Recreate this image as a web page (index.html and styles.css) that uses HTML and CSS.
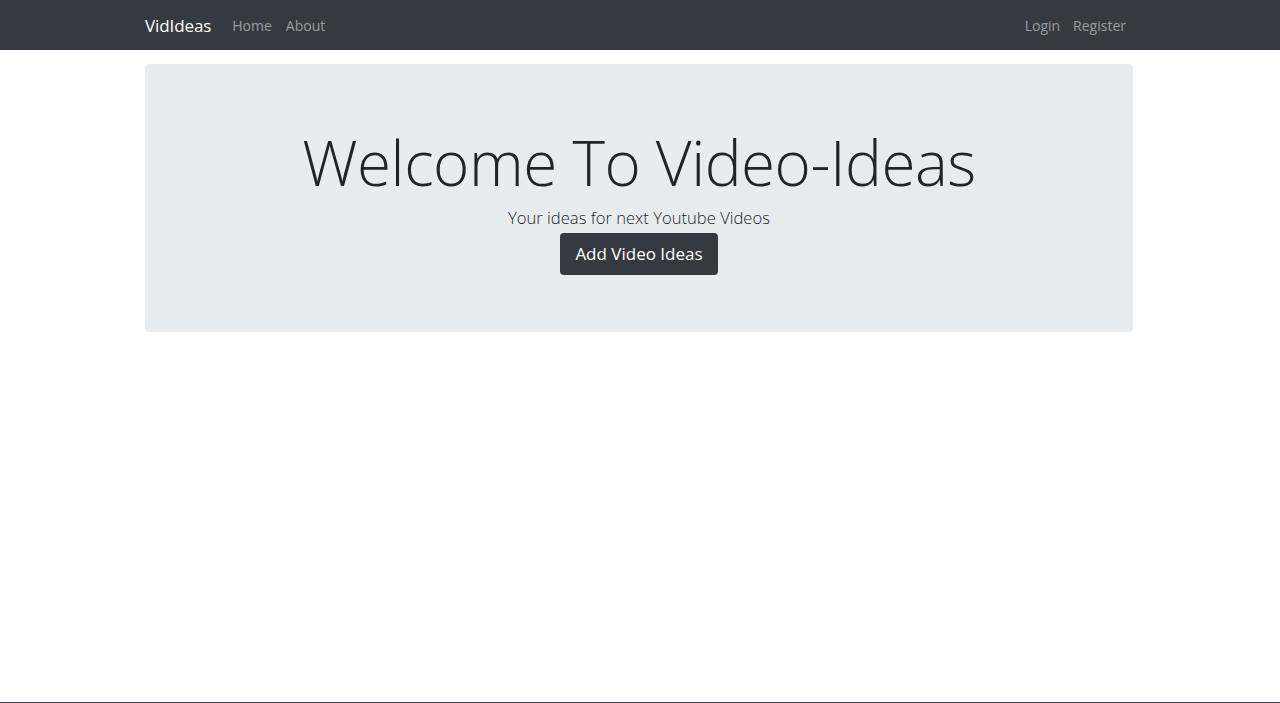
FILE: index.html
```html
<!DOCTYPE html>
<html lang="en">
<head>
<meta charset="utf-8">
<title>VidIdeas</title>
<link rel="stylesheet" href="styles.css">
</head>
<body>
<nav class="navbar">
  <div class="nav-inner">
    <div class="nav-left">
      <a class="brand" href="#">VidIdeas</a>
      <a class="nav-link" href="#">Home</a>
      <a class="nav-link" href="#">About</a>
    </div>
    <div class="nav-right">
      <a class="nav-link" href="#">Login</a>
      <a class="nav-link" href="#">Register</a>
    </div>
  </div>
</nav>
<main class="container">
  <section class="jumbotron">
    <h1 class="display">Welcome To Video-Ideas</h1>
    <p class="lead">Your ideas for next Youtube Videos</p>
    <a class="btn" href="#">Add Video Ideas</a>
  </section>
</main>
<div class="taskbar-edge"></div>
</body>
</html>
```
FILE: styles.css
```css
html, body {
  margin: 0;
  padding: 0;
  background: #ffffff;
  font-family: "Open Sans", "Noto Sans", "Liberation Sans", sans-serif;
  color: #212529;
}
a { text-decoration: none; }

.navbar {
  background: #343a40;
  height: 50px;
}
.nav-inner {
  width: 988px;
  margin-left: calc(50% - 495px);
  height: 50px;
  display: flex;
  align-items: center;
  justify-content: space-between;
}
.nav-left, .nav-right {
  display: flex;
  align-items: center;
}
.brand {
  color: #ffffff;
  font-size: 17px;
  margin-right: 14px;
  letter-spacing: -0.1px;
}
.nav-link {
  color: rgba(255,255,255,0.5);
  font-size: 14px;
  padding: 0 7px;
}
.nav-right .nav-link:first-child { padding-right: 6px; }

.container {
  width: 988px;
  margin: 14px 0 0 calc(50% - 495px);
}
.jumbotron {
  background: #e9ecef;
  border-radius: 4px;
  height: 268px;
  box-sizing: border-box;
  padding-top: 61px;
  display: flex;
  flex-direction: column;
  align-items: center;
  text-align: center;
}
.display {
  margin: 0 0 7px;
  font-weight: 300;
  font-size: 62px;
  line-height: 1.2;
  letter-spacing: -0.5px;
}
.lead {
  margin: 0 0 3px;
  font-weight: 300;
  font-size: 16.6px;
  line-height: 1.4;
}
.btn {
  display: inline-block;
  background: #343a40;
  color: #ffffff;
  font-size: 17px;
  line-height: 42px;
  height: 42px;
  padding: 0 15px;
  border-radius: 4px;
}
.taskbar-edge {
  position: fixed;
  left: 0;
  right: 0;
  bottom: 0;
  height: 1px;
  background: #3e434a;
}
```
